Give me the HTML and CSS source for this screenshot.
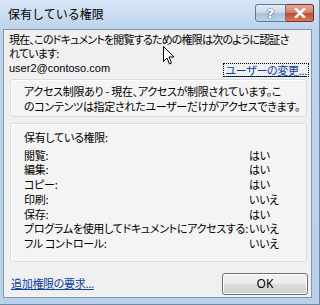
FILE: index.html
```html
<!DOCTYPE html>
<html lang="ja">
<head>
    <meta charset="UTF-8">
    <title>保有している権限</title>
    <link rel="stylesheet" href="styles.css">
</head>
<body>
    <div class="window">
        <!-- タイトルバー -->
        <div class="titlebar">
            <span class="title">保有している権限</span>
            <div class="caption-buttons">
                <span class="cap-btn help">?</span>
                <span class="cap-btn close">
                    <svg width="12" height="10" viewBox="0 0 12 10"><path d="M2 1 L10 9 M10 1 L2 9" stroke="#fff" stroke-width="2.6" stroke-linecap="square"/></svg>
                </span>
            </div>
        </div>

        <div class="client">
            <p class="intro">現在、このドキュメントを閲覧するための権限は次のように認証さ<br>れています:</p>
            <div class="user-row">
                <span class="user">user2@contoso.com</span>
                <a class="link focus" href="#">ユーザーの変更...</a>
            </div>

            <div class="group notice">
                アクセス制限あり - 現在、アクセスが制限されています。こ<br>のコンテンツは指定されたユーザーだけがアクセスできます。
            </div>

            <div class="group rights">
                <div class="rights-head">保有している権限:</div>
                <div class="right-row"><span>閲覧:</span><span class="val">はい</span></div>
                <div class="right-row"><span>編集:</span><span class="val">はい</span></div>
                <div class="right-row"><span>コピー:</span><span class="val">はい</span></div>
                <div class="right-row"><span>印刷:</span><span class="val">いいえ</span></div>
                <div class="right-row"><span>保存:</span><span class="val">はい</span></div>
                <div class="right-row"><span>プログラムを使用してドキュメントにアクセスする:</span><span class="val">いいえ</span></div>
                <div class="right-row"><span>フル コントロール:</span><span class="val">いいえ</span></div>
            </div>

            <div class="footer">
                <a class="link" href="#">追加権限の要求...</a>
                <button class="ok">OK</button>
            </div>
        </div>

        <!-- マウスカーソル -->
        <svg class="cursor" width="12" height="19" viewBox="0 0 12 19">
            <path d="M0.5 0.5 L0.5 15.5 L4 12 L6.5 18 L8.5 17 L6 11 L11 11 Z" fill="#fff" stroke="#000" stroke-width="1"/>
        </svg>
    </div>
</body>
</html>
```

FILE: styles.css
```css
body {
    margin: 0;
    background: #fff;
    font-family: "Noto Sans CJK JP", "Noto Sans", sans-serif;
    font-size: 11px;
    color: #000;
}
.window {
    position: relative;
    width: 320px;
    height: 305px;
    box-sizing: border-box;
    background: linear-gradient(to bottom, #d7e6f5 0px, #bcd3ec 30px, #b9d1ea 100%);
    border: 1px solid #6d8aa8;
    border-top: none;
    border-left: none;
    display: flex;
    flex-direction: column;
    padding: 0 7px 6px 3px;
    overflow: hidden;
}
.titlebar {
    height: 29px;
    display: flex;
    align-items: flex-start;
    justify-content: space-between;
    flex-shrink: 0;
}
.title {
    margin: 6px 0 0 5px;
    font-size: 12px;
    line-height: 16px;
    color: #000;
}
.caption-buttons {
    display: flex;
    margin-top: 4px;
    margin-right: -2px;
}
.cap-btn {
    height: 18px;
    box-sizing: border-box;
    border: 1px solid #5f7892;
    display: flex;
    align-items: center;
    justify-content: center;
}
.help {
    width: 31px;
    border-radius: 3px 0 0 3px;
    background: linear-gradient(to bottom, #e4eef8 0%, #c7d8ea 50%, #a9c0d9 51%, #bcd2e8 100%);
    color: #fff;
    font-family: "DejaVu Sans", sans-serif;
    font-weight: bold;
    font-size: 13px;
    text-shadow: 0 0 2px #44607f, 0 0 1px #44607f;
}
.close {
    width: 28px;
    border-left: none;
    border-color: #7a3022;
    border-radius: 0 3px 3px 0;
    background: linear-gradient(to bottom, #e9a99b 0%, #d47c66 50%, #c4472f 51%, #d8785a 100%);
}
.client {
    flex: 1;
    background: #f0f0f0;
    border: 1px solid #8298b0;
    padding: 2px 3px 0 5px;
    display: flex;
    flex-direction: column;
    font-feature-settings: "palt";
    letter-spacing: -0.3px;
    min-width: 0;
}
.intro {
    margin: 0;
    line-height: 14px;
    white-space: nowrap;
    letter-spacing: -0.8px;
}
.user-row {
    display: flex;
    justify-content: space-between;
    align-items: center;
    margin-top: 1px;
    height: 14px;
}
.user {
    font-family: "Liberation Sans", sans-serif;
    font-size: 11px;
    letter-spacing: 0;
}
.link {
    color: #0b3ea8;
    text-decoration: underline;
}
.focus {
    outline: 1px dotted #000;
    outline-offset: 0;
    line-height: 12px;
    margin-top: 3px;
    padding: 0 1px;
}
.group {
    border: 1px solid #d5dfe5;
    border-radius: 3px;
    margin-left: 1px;
    margin-right: 1px;
    background: #f4f4f4;
    box-shadow: inset 1px 1px 0 #fff;
}
.notice {
    margin-top: 4px;
    padding: 4px 8px 2px 13px;
    line-height: 15px;
    white-space: nowrap;
}
.rights {
    margin-top: 6px;
    padding: 6px 8px 10px 13px;
    line-height: 14.7px;
}
.rights-head {
    margin-bottom: 3px;
}
.right-row {
    display: flex;
    white-space: nowrap;
}
.right-row span:first-child {
    width: 225px;
}
.footer {
    display: flex;
    justify-content: space-between;
    align-items: flex-start;
    margin-top: 9px;
    padding-left: 2px;
}
.footer .link {
    margin-top: 4px;
}
.ok {
    width: 86px;
    height: 22px;
    margin-top: 2px;
    border: 1px solid #707070;
    border-radius: 3px;
    background: linear-gradient(to bottom, #f2f2f2 0%, #ebebeb 50%, #dddddd 51%, #cfcfcf 100%);
    box-shadow: inset 0 0 0 1px #fcfcfc;
    font-family: "Noto Sans", sans-serif;
    font-size: 12px;
    color: #000;
    padding: 0;
}
.cursor {
    position: absolute;
    left: 163px;
    top: 46px;
}
```
